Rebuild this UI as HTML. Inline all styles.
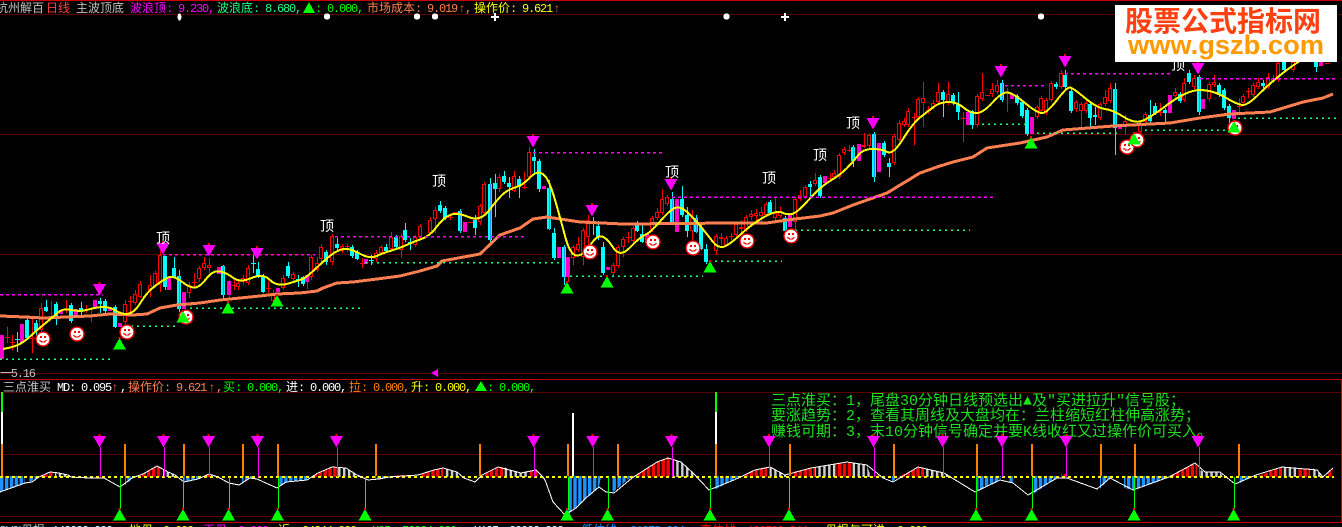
<!DOCTYPE html>
<html><head><meta charset="utf-8"><style>
html,body{margin:0;padding:0;background:#000;width:1342px;height:527px;overflow:hidden}
svg{display:block;position:absolute;left:0;top:0}
text{white-space:pre}
.c{font:12px "Liberation Sans","WenQuanYi Zen Hei","Noto Sans CJK SC",sans-serif}
.d{font:12px "Liberation Mono",monospace;letter-spacing:-1.2px}
.g{font:15px "Liberation Mono","WenQuanYi Zen Hei","Noto Sans CJK SC",monospace;fill:#1ee01e}
.t{font:14px "Liberation Sans","WenQuanYi Zen Hei","Noto Sans CJK SC",sans-serif;fill:#fff;text-anchor:middle}
</style></head><body>
<svg width="1342" height="527" viewBox="0 0 1342 527" fill="none" shape-rendering="crispEdges">
<defs>
<pattern id="pb" width="4.9" height="10" patternUnits="userSpaceOnUse"><rect x="0" width="3.6" height="10" fill="#1e90ff"/></pattern>
<pattern id="pr" width="4.9" height="10" patternUnits="userSpaceOnUse"><rect x="0" width="3.6" height="10" fill="#f00"/></pattern>
<pattern id="pw" width="4.9" height="10" patternUnits="userSpaceOnUse"><rect x="0" width="2.4" height="10" fill="#ccc"/></pattern>
<g id="dn"><path fill="#f0f" d="M-6.5 0h13L0 11.5z"/><rect x="-1" y="-2" width="2" height="2" fill="#f00"/></g>
<g id="up"><path fill="#0f0" d="M-6.5 11.5h13L0 0z"/><rect x="-1" y="-1" width="2" height="2" fill="#f00"/></g>
<g id="sm"><circle r="7" fill="#fff" stroke="#f00" stroke-width="1.4"/><rect x="-3" y="-3" width="2" height="2" fill="#f00"/><rect x="1.2" y="-3" width="2" height="2" fill="#f00"/><path d="M-3.5 1.2Q0 5 3.5 1.2" stroke="#f00" stroke-width="1.2"/></g>
<path id="rb" d="M41 308V330M125 304V322M135 294V303M140 284V297M150 285V291M155 273V286M160 255V285M189 285V293M199 268V279M204 263V268M209 265V268M238 283V287M243 278V282M248 268V283M273 293V301M283 278V288M293 274V279M311 257V277M317 263V270M321 247V259M332 236V262M342 246V251M376 253V259M381 247V253M391 237V249M401 236V250M415 237V245M420 226V237M430 220V233M435 210V219M480 206V222M484 184V213M499 177V189M514 176V191M529 152V177M573 247V258M578 244V250M583 230V257M588 220V237M613 265V273M618 247V266M623 239V247M633 228V241M652 218V229M657 212V218M662 199V213M667 197V204M692 218V231M716 236V251M721 237V239M726 238V245M736 224V235M741 227V229M746 217V230M751 214V217M756 213V216M761 212V216M766 204V215M775 213V218M780 212V216M795 199V222M800 195V199M805 187V197M815 180V184M834 173V177M839 155V177M844 149V153M864 145V147M869 135V146M894 136V163M899 123V140M904 121V125M908 111V125M918 99V117M923 98V103M933 103V108M938 92V102M948 94V103M977 96V125M982 92V99M992 89V94M997 85V92M1037 107V117M1041 98V111M1046 100V113M1051 83V100M1061 73V87M1076 102V109M1081 104V111M1086 103V111M1100 104V118M1105 97V104M1110 88V101M1125 121V125M1140 124V132M1145 114V122M1175 92V96M1184 83V100M1194 78V87M1209 84V99M1214 82V85M1243 96V103M1253 85V95M1258 82V87M1268 77V87M1273 78V81M1278 63V80M1293 62V70"/>
</defs>

<!-- grid -->
<g stroke="#5a0000" stroke-width="1">
<path d="M0 14.5H1342M0 134.5H1342M0 254.5H1342M0 373.5H1342M0 392.5H1342M0 454.5H1342M0 516.5H1342"/>
</g>
<g stroke="#c80000" stroke-width="1">
<path d="M0 .5H1342M0 379.5H1342M0 522.5H1342M1341.5 379V522"/>
</g>

<!-- candle wicks -->
<path stroke="#f00" stroke-width="1" d="M7.5 327V343M12.5 335V350M32.5 318V353M41.5 303V332M51.5 301V317M66.5 300V313M86.5 305V313M91.5 310V322M125.5 300V325M130.5 296V315M135.5 290V305M140.5 281V298M150.5 275V297M155.5 271V288M160.5 250V292M189.5 282V298M194.5 273V288M199.5 266V282M204.5 257V270M209.5 258V273M229.5 280V300M234.5 280V290M238.5 280V290M243.5 275V285M248.5 265V285M268.5 281V293M273.5 290V305M283.5 275V290M293.5 272V283M307.5 275V289M311.5 255V280M317.5 257V272M321.5 244V262M332.5 234V265M342.5 244V253M347.5 244V252M362.5 258V268M376.5 250V262M381.5 245V255M391.5 232V252M401.5 234V258M415.5 235V247M420.5 224V240M430.5 217V235M435.5 207V233M450.5 215V220M480.5 204V225M484.5 182V215M499.5 174V192M514.5 171V192M524.5 172V189M529.5 147V180M568.5 277V282M573.5 245V265M578.5 237V252M583.5 228V265M588.5 215V245M613.5 263V277M618.5 245V268M623.5 237V257M628.5 232V243M633.5 226V243M652.5 216V232M657.5 208V220M662.5 189V215M667.5 195V206M692.5 210V240M716.5 234V255M721.5 233V245M726.5 236V247M731.5 233V240M736.5 222V237M741.5 220V235M746.5 215V232M751.5 210V220M756.5 209V222M761.5 207V225M766.5 202V217M775.5 198V220M780.5 207V218M795.5 197V230M800.5 190V201M805.5 185V199M815.5 173V186M830.5 173V180M834.5 170V179M839.5 153V179M844.5 147V155M849.5 145V152M864.5 133V148M869.5 133V148M894.5 134V165M899.5 120V142M904.5 118V127M908.5 108V127M914.5 113V145M918.5 97V119M923.5 82V127M928.5 106V114M933.5 100V110M938.5 83V104M948.5 82V105M963.5 112V142M977.5 94V127M982.5 73V101M992.5 83V97M997.5 80V94M1007.5 88V112M1037.5 105V119M1041.5 96V113M1046.5 98V115M1051.5 81V102M1061.5 70V89M1076.5 100V112M1081.5 102V128M1086.5 101V113M1100.5 102V120M1105.5 90V106M1110.5 83V103M1125.5 115V135M1140.5 120V134M1145.5 112V124M1160.5 103V116M1175.5 88V98M1184.5 78V102M1194.5 75V89M1209.5 82V101M1214.5 75V87M1239.5 98V115M1243.5 94V105M1248.5 88V98M1253.5 83V97M1258.5 78V89M1268.5 73V89M1273.5 75V83M1278.5 62V82M1293.5 62V72M5 337.5h5M10 342.5h5M30 338.5h5M128 301.5h5M192 282.5h5M232 285.5h5M266 288.5h5M345 246.5h5M360 263.5h5M448 217.5h5M453 212.5h5M468 222.5h5M522 187.5h5M626 237.5h5M729 236.5h5M828 178.5h5M847 150.5h5M912 117.5h5M926 110.5h5M961 118.5h5M985 95.5h5M1005 92.5h5M1158 112.5h5M1237 106.5h5M1246 91.5h5M1325 63.5h5"/>
<path stroke="#0ff" stroke-width="1" d="M17.5 332V352M27.5 318V340M36.5 320V337M46.5 300V312M56.5 302V325M71.5 303V323M81.5 302V317M100.5 298V313M105.5 299V313M115.5 305V328M165.5 256V290M174.5 257V278M179.5 270V312M223.5 265V298M253.5 255V273M258.5 262V278M263.5 274V293M288.5 262V278M303.5 276V286M298.5 275V287M326.5 250V265M337.5 238V250M352.5 245V258M357.5 250V260M371.5 255V265M386.5 244V253M396.5 235V250M405.5 223V242M410.5 238V250M440.5 201V213M445.5 206V220M460.5 209V233M475.5 215V235M490.5 178V242M495.5 174V217M504.5 171V184M509.5 177V198M519.5 176V198M534.5 149V173M539.5 159V192M549.5 180V230M554.5 228V260M564.5 245V285M593.5 217V235M598.5 221V240M603.5 242V275M637.5 221V232M642.5 225V243M672.5 192V225M682.5 186V217M687.5 207V237M696.5 215V233M701.5 225V250M706.5 244V264M770.5 200V215M785.5 216V233M810.5 181V197M820.5 175V198M853.5 145V167M874.5 132V182M884.5 141V157M889.5 158V177M943.5 90V117M953.5 93V105M958.5 92V120M972.5 110V129M1002.5 80V102M1017.5 94V105M1022.5 100V118M1027.5 108V136M1056.5 82V89M1065.5 70V89M1071.5 89V113M1090.5 102V128M1095.5 107V125M1115.5 83V155M1150.5 100V123M1155.5 103V115M1165.5 108V123M1180.5 92V103M1189.5 70V84M1199.5 75V115M1219.5 83V97M1224.5 88V110M1229.5 104V125M1263.5 80V88M1284.5 62V72M1316.5 62V72M15 339.5h5M251 263.5h5M369 260.5h5M408 242.5h5"/>

<!-- red hollow bodies -->
<use href="#rb" stroke="#f00" stroke-width="4"/>
<path stroke="#000" stroke-width="2" d="M41 309V329M125 305V321M135 295V302M140 285V296M150 286V290M155 274V285M160 256V284M189 286V292M199 269V278M204 264V267M209 266V267M238 284V286M243 279V281M248 269V282M273 294V300M283 279V287M293 275V278M311 258V276M317 264V269M321 248V258M332 237V261M342 247V250M376 254V258M381 248V252M391 238V248M401 237V249M415 238V244M420 227V236M430 221V232M435 211V218M480 207V221M484 185V212M499 178V188M514 177V190M529 153V176M573 248V257M578 245V249M583 231V256M588 221V236M613 266V272M618 248V265M623 240V246M633 229V240M652 219V228M657 213V217M662 200V212M667 198V203M692 219V230M716 237V250M726 239V244M736 225V234M746 218V229M751 215V216M756 214V215M761 213V215M766 205V214M775 214V217M780 213V215M795 200V221M800 196V198M805 188V196M815 181V183M834 174V176M839 156V176M844 150V152M869 136V145M894 137V162M899 124V139M904 122V124M908 112V124M918 100V116M923 99V102M933 104V107M938 93V101M948 95V102M977 97V124M982 93V98M992 90V93M997 86V91M1037 108V116M1041 99V110M1046 101V112M1051 84V99M1061 74V86M1076 103V108M1081 105V110M1086 104V110M1100 105V117M1105 98V103M1110 89V100M1125 122V124M1140 125V131M1145 115V121M1175 93V95M1184 84V99M1194 79V86M1209 85V98M1214 83V84M1243 97V102M1253 86V94M1258 83V86M1268 78V86M1273 79V80M1278 64V79M1293 63V69"/>
<!-- cyan bodies -->
<path stroke="#0ff" stroke-width="4" d="M27 320V338M36 323V331M46 307V311M56 304V317M71 305V321M81 308V312M100 301V304M105 301V311M115 307V327M165 256V287M174 268V277M179 276V309M223 266V295M258 269V277M263 276V292M288 266V276M303 277V284M298 279V281M326 252V262M337 244V248M352 247V256M357 252V259M386 247V251M396 237V247M405 230V240M440 205V211M445 208V218M460 211V231M475 220V228M490 184V240M495 183V189M504 176V182M509 183V187M519 179V187M534 157V161M539 161V189M549 188V229M554 233V258M564 247V277M593 222V224M598 226V237M603 247V273M637 223V231M642 234V242M672 199V222M682 199V215M687 215V231M696 218V232M701 227V249M706 249V262M770 202V213M785 218V231M810 184V187M820 177V196M853 147V161M874 134V177M884 143V155M889 163V167M943 92V100M953 95V103M958 104V112M972 111V125M1002 83V100M1017 96V103M1022 102V116M1027 110V134M1056 84V87M1065 75V87M1071 91V111M1090 104V118M1095 115V117M1115 89V128M1150 115V121M1155 106V113M1165 110V113M1180 94V101M1189 73V82M1199 77V112M1219 85V95M1224 90V108M1229 106V118M1263 83V86M1284 62V70M1316 62V67"/>
<path stroke="#1e90ff" stroke-width="1" d="M179.5 276V309M223.5 266V295M460.5 211V231M490.5 184V240M549.5 188V229M564.5 247V277M672.5 199V222M696.5 218V232M785.5 218V231M853.5 147V161M874.5 134V177M1002.5 83V100M1115.5 89V128M1199.5 77V112"/>
<!-- magenta bodies -->
<path stroke="#f0c" stroke-width="4" d="M2 335V359M22 324V342M61 310V314M76 309V317M95 300V309M110 307V311M120 323V327M169 278V290M184 292V309M219 267V274M229 281V295M278 288V292M307 275V282M366 259V264M465 222V232M544 186V189M559 247V258M568 257V277M608 267V270M647 233V243M677 199V232M790 215V227M825 176V183M859 144V161M879 143V172M968 112V125M1012 94V99M1032 117V134M1120 126V129M1170 95V113M1203 99V109M1234 110V119M1321 62V66"/>

<!-- orange MA -->
<polyline stroke="#ff7f50" stroke-width="3" stroke-linejoin="round" points="0,316 25,317 43,318 90,316 110,314 133,315 147,314 160,308 177,305 200,303 220,300 240,298 260,296 277,294 300,293 317,291 323,288 337,283 353,282 377,279 400,276 420,271 437,266 442,261 480,254 500,235 520,228 533,219 547,217 580,222 623,224 733,223 767,223 787,220 820,216 833,213 853,205 887,193 920,173 937,167 953,162 973,157 987,148 1020,143 1047,137 1063,130 1113,126 1170,123 1200,118 1230,114 1270,112 1303,102 1323,98 1333,94"/>
<!-- yellow line -->
<path stroke="#ff0" stroke-width="2" stroke-linejoin="round" d="M3 349Q10 348 16.5 345.5Q23 343 30 336.5Q37 330 45 323.5Q53 317 58 312.5Q63 308 71.5 310Q80 312 88.5 309.5Q97 307 103.5 307Q110 307 116.5 311Q123 315 129 313.5Q135 312 141 302Q147 292 155 286Q163 280 168 277.5Q173 275 181.5 281.5Q190 288 195 287.5Q200 287 206.5 278.5Q213 270 220 271.5Q227 273 233.5 278Q240 283 251.5 278Q263 273 270 280Q277 287 288.5 283.5Q300 280 303.5 278.5Q307 277 318.5 266Q330 255 336.5 251.5Q343 248 348 249Q353 250 361.5 254.5Q370 259 376.5 256Q383 253 391.5 250.5Q400 248 406.5 245Q413 242 421.5 239Q430 236 436.5 227Q443 218 450 215Q457 212 468.5 217Q480 222 488.5 211Q497 200 502 195Q507 190 515 187.5Q523 185 529 178.5Q535 172 539 172.5Q543 173 546.5 178Q550 183 555 200Q560 217 565 236Q570 255 576.5 255.5Q583 256 590 245.5Q597 235 602 236.5Q607 238 613.5 248Q620 258 630 247.5Q640 237 645 235Q650 233 660 221.5Q670 210 675 208Q680 206 686.5 211.5Q693 217 701.5 227.5Q710 238 713.5 242.5Q717 247 722 247Q727 247 740 235Q753 223 765 216.5Q777 210 782 212.5Q787 215 792 214Q797 213 808.5 200Q820 187 830 181Q840 175 846.5 168.5Q853 162 858 155.5Q863 149 872.5 149Q882 149 887.5 152Q893 155 903 139Q913 123 920 117.5Q927 112 933.5 107Q940 102 948.5 102Q957 102 963.5 107.5Q970 113 976.5 113Q983 113 992.5 102.5Q1002 92 1007.5 92.5Q1013 93 1025 103Q1037 113 1042 113Q1047 113 1057 100Q1067 87 1070 87.5Q1073 88 1085 98Q1097 108 1105 109Q1113 110 1123 116.5Q1133 123 1140 121.5Q1147 120 1167 105Q1187 90 1200 90Q1213 90 1225.5 97.5Q1238 105 1243 105Q1248 105 1259 94Q1270 83 1283.5 72.5Q1297 62 1310 55"/>

<!-- dotted levels -->
<g stroke="#f0f" stroke-width="1.5" stroke-dasharray="3 3">
<path d="M0 294.5H103M163 254.5H315M335 236.5H527M533 152.5H664M672 197H994M1005 85.5H1044M1065 73.5H1170M1200 78.5H1336"/>
</g>
<g stroke="#20ff80" stroke-width="1.5" stroke-dasharray="2 4">
<path d="M0 359H112M125 326H176M190 308H360M365 262.5H560M570 276H703M715 261H782M795 230H970M982 124H1026M1037 133H1120M1145 130H1228M1238 118H1336"/>
</g>

<!-- smileys -->
<use href="#sm" x="43" y="339"/><use href="#sm" x="77" y="334"/><use href="#sm" x="127" y="332"/><use href="#sm" x="186" y="317"/><use href="#sm" x="590" y="252"/><use href="#sm" x="653" y="242"/><use href="#sm" x="693" y="248"/><use href="#sm" x="747" y="241"/><use href="#sm" x="791" y="236"/><use href="#sm" x="1127" y="147"/><use href="#sm" x="1137" y="140"/><use href="#sm" x="1235" y="128"/>

<!-- signal triangles top -->
<use href="#dn" x="99.5" y="284"/><use href="#dn" x="163" y="243"/><use href="#dn" x="209" y="245"/><use href="#dn" x="257" y="248"/><use href="#dn" x="533" y="136"/><use href="#dn" x="592" y="205"/><use href="#dn" x="671" y="179"/><use href="#dn" x="873" y="118"/><use href="#dn" x="1001" y="66"/><use href="#dn" x="1065" y="56"/><use href="#dn" x="1198" y="63"/>
<use href="#up" x="119.5" y="338"/><use href="#up" x="183" y="311"/><use href="#up" x="228" y="302"/><use href="#up" x="277" y="295"/><use href="#up" x="567" y="282"/><use href="#up" x="607" y="276"/><use href="#up" x="710" y="261"/><use href="#up" x="1031" y="137"/><use href="#up" x="1134" y="133"/><use href="#up" x="1234" y="121"/>

<text class="t" x="163" y="243">顶</text><text class="t" x="327" y="231">顶</text><text class="t" x="439" y="186">顶</text><text class="t" x="672" y="177">顶</text><text class="t" x="769" y="183">顶</text><text class="t" x="853" y="128">顶</text><text class="t" x="820" y="160">顶</text><text class="t" x="1178" y="70">顶</text>

<!-- top markers -->
<g fill="#fff">
<ellipse cx="179.5" cy="17" rx="2" ry="3.6"/><circle cx="327" cy="16.5" r="3.2"/><circle cx="417" cy="16.5" r="3.2"/><circle cx="435" cy="16.5" r="3.2"/><circle cx="726.5" cy="16.5" r="3.2"/><circle cx="1041" cy="16.5" r="3.2"/>
<path d="M494 13h2v3h3v2h-3v3h-2v-3h-3v-2h3zM784 13h2v3h3v2h-3v3h-2v-3h-3v-2h3z"/>
</g>
<path fill="#f0f" d="M431 373l7-4v8z"/>

<!-- logo -->
<rect x="1115" y="5" width="222" height="57" fill="#fff"/>
<text x="1125" y="31" fill="#ff4010" textLength="196" lengthAdjust="spacingAndGlyphs" style="font:bold 28px 'Noto Sans CJK SC','WenQuanYi Zen Hei',sans-serif">股票公式指标网</text>
<text x="1128" y="54" fill="#ff9a00" textLength="196" lengthAdjust="spacingAndGlyphs" style="font:bold 27px 'Liberation Sans',sans-serif">www.gszb.com</text>

<!-- top legend -->
<text class="c" x="-4" y="12" fill="#c0c0c0">杭州解百</text><text class="c" x="46" y="12" fill="#ff4040">日线</text><text class="c" x="76" y="12" fill="#c0c0c0">主波顶底</text>
<text class="c" x="130" y="12" fill="#f0f">波浪顶</text><text class="d" x="166" y="12" fill="#f0f">: 9.230,</text>
<text class="c" x="217" y="12" fill="#20ff80">波浪底</text><text class="d" x="253" y="12" fill="#20ff80">: 8.680,</text>
<path fill="#0f0" d="M303 13l6-11 6 11z"/><text class="d" x="315" y="12" fill="#0f0">: 0.000,</text>
<text class="c" x="367" y="12" fill="#ff8050">市场成本</text><text class="d" x="415" y="12" fill="#ff8050">: 9.019</text><text class="c" x="459" y="12" fill="#ff6040">↑</text><text class="d" x="465" y="12" fill="#ff8050">,</text>
<text class="c" x="474" y="12" fill="#ff0">操作价</text><text class="d" x="510" y="12" fill="#ff0">: 9.621</text><text class="c" x="554" y="12" fill="#ff6040">↑</text>

<text class="d" x="0" y="377" fill="#c0c0c0">一5.16</text>

<!-- sub-pane legend -->
<text class="c" x="3" y="391" fill="#c0c0c0">三点淮买</text><text class="d" x="57" y="391" fill="#fff">MD: 0.095</text><text class="c" x="112" y="391" fill="#ff6040">↑</text><text class="d" x="120" y="391" fill="#fff">,</text>
<text class="c" x="128" y="391" fill="#ff8050">操作价</text><text class="d" x="164" y="391" fill="#ff8050">: 9.621</text><text class="c" x="209" y="391" fill="#ff6040">↑</text><text class="d" x="216" y="391" fill="#ff8050">,</text>
<text class="c" x="223" y="391" fill="#0f0">买</text><text class="d" x="235" y="391" fill="#0f0">: 0.000,</text>
<text class="c" x="286" y="391" fill="#fff">进</text><text class="d" x="298" y="391" fill="#fff">: 0.000,</text>
<text class="c" x="349" y="391" fill="#ff8000">拉</text><text class="d" x="361" y="391" fill="#ff8000">: 0.000,</text>
<text class="c" x="411" y="391" fill="#ff0">升</text><text class="d" x="423" y="391" fill="#ff0">: 0.000,</text>
<path fill="#0f0" d="M475 391l6-10 6 10z"/><text class="d" x="487" y="391" fill="#0f0">: 0.000,</text>

<!-- explain text -->
<text class="g" x="771" y="405">三点淮买：1，尾盘30分钟日线预选出▲及"买进拉升"信号股；</text>
<text class="g" x="771" y="420">要涨趋势：2，查看其周线及大盘均在：兰柱缩短红柱伸高涨势；</text>
<text class="g" x="771" y="436">赚钱可期：3，末10分钟信号确定并要K线收红又过操作价可买入。</text>

<!-- histogram -->
<g fill="url(#pb)">
<polygon points="0,476 0,492 14,487 25,483 25,476"/><polygon points="29,476 29,482 38,478 38,476"/><polygon points="125,476 125,485 132,479 137,476"/><polygon points="184,476 184,482 198,479 198,476"/><polygon points="242,476 242,484 250,478 253,479 253,476"/><polygon points="278,476 278,488 286,482 308,480 308,476"/><polygon points="375,476 375,479 388,477 388,476"/><polygon points="480,476 480,478 484,476"/><polygon points="567,476 567,515 576,508 586,498 599,487 601,476"/><polygon points="612,476 612,493 632,476"/><polygon points="714,476 714,490 734,480 738,476"/><polygon points="892,476 892,482 896,478 896,476"/><polygon points="976,476 976,492 1000,480 1001,476"/><polygon points="1009,476 1009,483 1013,483 1013,476"/><polygon points="1032,476 1032,495 1056,478 1057,476"/><polygon points="1100,476 1100,489 1110,478 1111,476"/><polygon points="1124,476 1124,488 1133,490 1167,477 1167,476"/><polygon points="1238,476 1238,484 1251,477 1252,476"/>
</g>
<g fill="url(#pr)">
<polygon points="40,477 50,472 54,473 54,477"/><polygon points="139,477 143,474 157,466 162,468 162,477"/><polygon points="203,477 209,474 212,475 212,477"/><polygon points="311,477 318,473 332,467 337,467 337,477"/><polygon points="395,477 395,475 411,475 411,477"/><polygon points="420,477 420,475 434,470 443,468 443,477"/><polygon points="483,477 483,475 498,467 503,467 503,477"/><polygon points="530,477 530,471 538,470 538,477"/><polygon points="632,477 657,462 668,458 671,459 671,477"/><polygon points="742,477 755,470 767,467 767,477"/><polygon points="793,477 793,472 811,468 815,467 815,477"/><polygon points="835,477 835,464 852,463 852,477"/><polygon points="875,477 875,475 880,475 880,477"/><polygon points="898,477 918,467 924,469 924,477"/><polygon points="1061,477 1061,474 1067,474 1067,477"/><polygon points="1170,477 1195,463 1197,464 1197,477"/><polygon points="1255,477 1282,467 1282,477"/><polygon points="1297,477 1297,469 1310,468 1310,477"/><polygon points="1325,477 1333,468 1333,477"/>
</g>
<g fill="url(#pw)">
<polygon points="55,477 55,473 68,475 70,477"/><polygon points="163,477 163,469 168,472 176,476 176,477"/><polygon points="213,477 213,475 220,477"/><polygon points="338,477 338,467 346,468 357,475 360,477"/><polygon points="444,477 444,468 457,472 459,477"/><polygon points="503,477 503,467 521,473 529,471 529,477"/><polygon points="672,477 672,459 681,462 693,473 697,477"/><polygon points="770,477 770,467 785,475 788,477"/><polygon points="815,477 815,467 835,464 835,477"/><polygon points="852,477 852,463 867,465 871,477"/><polygon points="924,477 924,469 944,473 950,477"/><polygon points="1200,477 1200,470 1205,472 1220,472 1223,477"/><polygon points="1282,477 1282,467 1296,468 1296,477"/><polygon points="1311,477 1311,468 1317,470 1322,477"/>
</g>
<path stroke="#ff0" stroke-width="2" stroke-dasharray="3 3" d="M0 477H1334"/>
<polyline stroke="#fff" stroke-width="1" points="0,492 14,487 25,483 32,482 39,477 50,472 59,473 68,475 71,477 89,478 104,478 120,487 132,478 143,474 157,466 168,472 175,475 184,482 198,479 209,474 218,477 229,483 239,485 250,478 257,479 277,488 286,482 307,480 318,473 332,467 346,468 357,475 368,480 379,479 389,477 418,475 434,470 443,468 457,472 464,478 475,482 482,475 498,467 521,473 536,470 543,477 545,480 553,502 565,515 576,508 586,498 599,487 606,492 614,493 632,478 657,462 668,458 681,462 693,473 709,490 734,480 755,470 770,467 785,475 811,468 847,462 867,465 883,478 893,482 918,467 944,473 975,492 1000,480 1013,483 1028,495 1057,478 1067,478 1097,489 1110,478 1133,490 1169,477 1195,463 1205,472 1220,472 1235,484 1256,475 1282,467 1317,470 1323,477 1333,468"/>

<!-- orange / tri-colour bars -->
<path stroke="#ff8000" stroke-width="2" d="M125 444V476M184 444V476M243 444V476M278 444V476M376 444V476M480 444V476M568 444V476M618 444V476M716 444V476M790 444V476M894 444V476M977 444V476M1032 444V476M1101 444V476M1135 444V476M1239 444V476M2 444V476"/>
<path stroke="#fff" stroke-width="2" d="M2 412V444M716 412V444M573 413V476"/>
<path stroke="#0f0" stroke-width="2" d="M2 392V412M716 392V412"/>

<!-- magenta signal lines -->
<path stroke="#f0f" stroke-width="1" d="M100.5 447V477M164.5 447V477M209.5 447V477M258.5 447V477M337.5 447V477M534.5 447V477M593.5 447V477M672.5 447V477M769.5 447V477M874.5 447V477M943.5 447V477M1002.5 447V477M1066.5 447V477M1199.5 447V477"/>
<use href="#dn" x="99.6" y="436"/><use href="#dn" x="163.5" y="436"/><use href="#dn" x="208.6" y="436"/><use href="#dn" x="257.5" y="436"/><use href="#dn" x="336.4" y="436"/><use href="#dn" x="533.6" y="436"/><use href="#dn" x="592.7" y="436"/><use href="#dn" x="671.5" y="436"/><use href="#dn" x="769" y="436"/><use href="#dn" x="873.5" y="436"/><use href="#dn" x="942.6" y="436"/><use href="#dn" x="1002" y="436"/><use href="#dn" x="1066" y="436"/><use href="#dn" x="1198" y="436"/>

<!-- green signal lines -->
<path stroke="#0f0" stroke-width="1" d="M120.5 477V509M183.5 477V509M229.5 477V509M278.5 477V509M365.5 477V509M568.5 510V477M608.5 477V509M710.5 477V509M789.5 477V509M976.5 477V509M1032.5 477V509M1134.5 477V509M1234.5 477V509"/>
<use href="#up" x="119.6" y="509"/><use href="#up" x="183" y="509"/><use href="#up" x="228.6" y="509"/><use href="#up" x="277.5" y="509"/><use href="#up" x="365" y="509"/><use href="#up" x="567" y="509"/><use href="#up" x="607.5" y="509"/><use href="#up" x="710" y="509"/><use href="#up" x="789" y="509"/><use href="#up" x="976" y="509"/><use href="#up" x="1031.6" y="509"/><use href="#up" x="1134" y="509"/><use href="#up" x="1233.6" y="509"/>

<!-- bottom legend (clipped) -->
<text class="d" x="0" y="534" fill="#c0c0c0">DVOL</text><text class="c" x="21" y="534" fill="#c0c0c0">母根</text><text class="d" x="52" y="534" fill="#fff">140000.000</text><text class="c" x="113" y="534" fill="#ff6040">↑</text>
<text class="c" x="129" y="534" fill="#ff0">地母</text><text class="d" x="163" y="534" fill="#ff0">0.000</text>
<text class="c" x="203" y="534" fill="#f0f">天母</text><text class="d" x="238" y="534" fill="#f0f">0.000</text>
<text class="c" x="278" y="534" fill="#ff0">近</text><text class="d" x="302" y="534" fill="#ff0">04344.000</text><text class="c" x="358" y="534" fill="#ff6040">↑</text>
<text class="d" x="372" y="534" fill="#0f0">X05</text><text class="d" x="402" y="534" fill="#0f0">72224.000</text><text class="c" x="459" y="534" fill="#ff6040">↑</text>
<text class="d" x="474" y="534" fill="#fff">X105</text><text class="d" x="509" y="534" fill="#fff">00000.000</text><text class="c" x="566" y="534" fill="#ff6040">↑</text>
<text class="c" x="581" y="534" fill="#1e90ff">低位线</text><text class="d" x="630" y="534" fill="#1e90ff">01078.004</text><text class="c" x="685" y="534" fill="#ff6040">↑</text>
<text class="c" x="700" y="534" fill="#f00">高位线</text><text class="d" x="747" y="534" fill="#f00">100700.344</text><text class="c" x="801" y="534" fill="#ff6040">↑</text>
<text class="c" x="825" y="534" fill="#ff0">母根与可进</text><text class="d" x="897" y="534" fill="#ff0">0.000</text>
</svg>
</body></html>
